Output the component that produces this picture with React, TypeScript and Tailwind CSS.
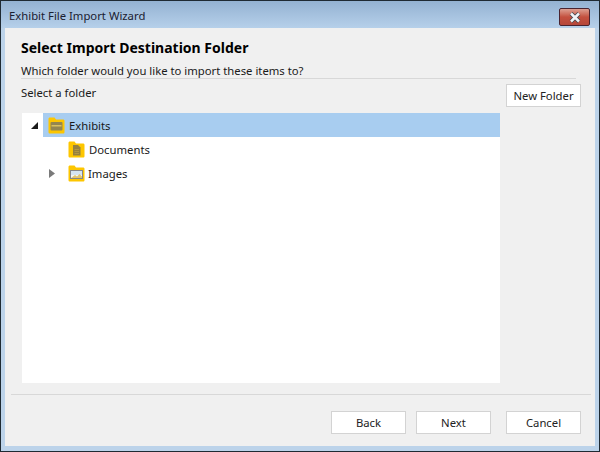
function FolderIcon({ kind }: { kind: "box" | "doc" | "image" }) {
  return (
    <svg width="17" height="17" viewBox="0 0 17 17" className="shrink-0">
      <path d="M0.500 2C0.500 1 1 0.500 2 0.500H6.500L8 2.500H15C16 2.500 16.500 3 16.500 4V15C16.500 16 16 16.500 15 16.500H2C1 16.500 0.500 16 0.500 15Z" fill="#fdc600" />
      {kind === "box" && (
        <>
          <rect x="2.500" y="5" width="12" height="8.500" rx="1" fill="#948650" />
          <rect x="3.500" y="8" width="10" height="1.500" fill="#d8c060" />
        </>
      )}
      {kind === "doc" && (
        <>
          <path d="M5 4H10L12.500 6.500V14.500H5Z" fill="#94803f" />
          <path d="M6.500 8.500H11M6.500 10.500H11M6.500 12.500H11" stroke="#b89c45" strokeWidth="0.800" />
        </>
      )}
      {kind === "image" && (
        <>
          <rect x="2.500" y="5.500" width="12" height="8" fill="#f4f6f8" stroke="#85868a" />
          <rect x="3" y="6" width="11" height="4" fill="#d5e4f2" />
          <path d="M3 13L7 10L9 11.500L11.500 9L14 11.500V13Z" fill="#e0c470" />
        </>
      )}
    </svg>
  );
}

function Btn({ label }: { label: string }) {
  return (
    <button className="w-[75px] h-[23px] bg-white border border-[#d3d3d3] text-[11.300px] text-[#222] leading-none">
      {label}
    </button>
  );
}

export default function App() {
  return (
    <div className="w-[600px] h-[452px] flex flex-col border border-[#1f2a33] bg-[#bcd3ea] font-['Noto_Sans','Open_Sans',sans-serif] text-[11.300px] text-[#1a1a1a] overflow-hidden">
      <div className="h-[27px] shrink-0 flex items-center justify-between pl-[8px] pr-[9px] bg-gradient-to-b from-[#94b2d2] to-[#b6d0ea]">
        <span className="text-[#1a2030] mt-[3px]">Exhibit File Import Wizard</span>
        <div className="w-[31px] h-[18px] mt-[5px] flex items-center justify-center rounded-[2px] border border-[#4a2430] bg-gradient-to-b from-[#dc9f92] via-[#c4503f] to-[#b5473a]">
          <svg width="14" height="11" viewBox="0 0 14 11">
            <path d="M3 1.500L11 9.500M11 1.500L3 9.500" stroke="#3f4650" strokeWidth="4" />
            <path d="M3 1.500L11 9.500M11 1.500L3 9.500" stroke="#f1f3f6" strokeWidth="2.500" />
          </svg>
        </div>
      </div>

      <div className="flex-1 mx-[4px] mb-[5px] bg-[#f0f0f0] flex flex-col">
        <div className="pl-[16px] pr-[14px] pt-[10px]">
          <h1 className="text-[14px] font-bold text-black leading-[20px]">Select Import Destination Folder</h1>
          <p className="mt-[3px] leading-[20px]">Which folder would you like to import these items to?</p>
          <div className="h-px bg-[#d8d8d8] mr-[5px] -mt-[3px]" />
        </div>

        <div className="flex items-start justify-between pl-[16px] pr-[14px] mt-[5px]">
          <span className="leading-[18px]">Select a folder</span>
          <Btn label="New Folder" />
        </div>

        <div className="ml-[17px] mt-[6px] w-[478px] h-[270px] bg-white pl-[8px] flex flex-col">
          <div className="h-[24px] flex items-center">
            <svg width="13" height="24" viewBox="0 0 13 24" className="shrink-0">
              <path d="M1 16L8 16V9Z" fill="#1a1a1a" />
            </svg>
            <div className="flex-1 h-[24px] bg-[#a8cdf0] flex items-center gap-[4px] pl-[5px]">
              <FolderIcon kind="box" />
              <span className="mt-[3px]">Exhibits</span>
            </div>
          </div>
          <div className="h-[24px] flex items-center gap-[4px] pl-[38px]">
            <FolderIcon kind="doc" />
            <span className="mt-[3px]">Documents</span>
          </div>
          <div className="h-[24px] flex items-center pl-[18px]">
            <svg width="20" height="24" viewBox="0 0 20 24" className="shrink-0">
              <path d="M1 8L7 12.500L1 17Z" fill="#7a7a7a" />
            </svg>
            <FolderIcon kind="image" />
            <span className="ml-[3px] mt-[3px]">Images</span>
          </div>
        </div>

        <div className="h-px bg-[#d8d8d8] ml-[6px] mr-[4px] mt-[11px]" />

        <div className="flex justify-end pr-[14px] mt-[16px]">
          <Btn label="Back" />
          <div className="ml-[10px]">
            <Btn label="Next" />
          </div>
          <div className="ml-[15px]">
            <Btn label="Cancel" />
          </div>
        </div>
      </div>
    </div>
  );
}
